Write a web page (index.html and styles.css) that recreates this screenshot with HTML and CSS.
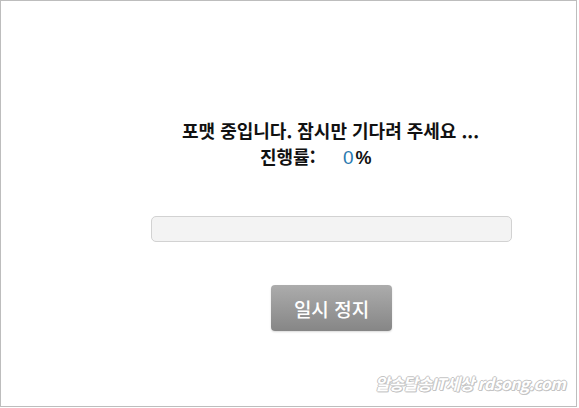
FILE: index.html
```html
<!DOCTYPE html>
<html lang="ko">
<head>
<meta charset="utf-8">
<link rel="stylesheet" href="styles.css">
</head>
<body>
<div class="frame">
  <div class="msg">
    <p class="title">포맷 중입니다. 잠시만 기다려 주세요 ...</p>
    <p class="progress-line"><span class="label">진행률:</span><span class="value">0</span><span class="pct">%</span></p>
  </div>
  <div class="bar"></div>
  <div class="actions">
    <button class="pause">일시 정지</button>
  </div>
  <div class="watermark">알송달송IT세상 rdsong.com</div>
</div>
</body>
</html>
```
FILE: styles.css
```css
html, body {
  margin: 0;
  padding: 0;
  background: #fff;
}
.frame {
  position: relative;
  box-sizing: border-box;
  width: 577px;
  height: 407px;
  border: 1px solid #bdbdbd;
  font-family: "Noto Sans CJK KR", "Noto Sans", sans-serif;
  color: #111;
  overflow: hidden;
}
.msg {
  padding-top: 116px;
}
.msg p {
  margin: 0;
  font-weight: bold;
  font-size: 18px;
  line-height: 26px;
  white-space: nowrap;
}
.title {
  padding-left: 181px;
}
.progress-line {
  padding-left: 259px;
}
.label {
  display: inline-block;
  width: 83px;
}
.value {
  color: #2a7ab0;
  font-family: "Liberation Sans", sans-serif;
  font-weight: normal;
  font-size: 19px;
  margin-right: 2px;
}
.pct {
  font-family: "Liberation Sans", sans-serif;
  font-size: 18px;
}
.bar {
  margin: 45px 0 0 150px;
  width: 361px;
  height: 26px;
  box-sizing: border-box;
  border: 1px solid #d2d2d2;
  border-radius: 5px;
  background: #f3f3f3;
}
.actions {
  margin: 43px 0 0 270px;
}
.pause {
  display: block;
  width: 121px;
  height: 46px;
  border: none;
  border-radius: 4px;
  background: linear-gradient(#acacac, #868686);
  color: #fff;
  font-family: "Noto Sans CJK KR", sans-serif;
  font-weight: 500;
  font-size: 19px;
  padding: 0;
  box-shadow: 0 1px 2px rgba(0,0,0,0.15);
}
.watermark {
  position: absolute;
  right: 11px;
  bottom: 11px;
  font-family: "Noto Sans CJK KR", sans-serif;
  font-weight: bold;
  font-style: italic;
  font-size: 16px;
  color: #fff;
  letter-spacing: -0.6px;
  text-shadow: 1px 0 0 #c4c4c4, -1px 0 0 #c4c4c4, 0 1px 0 #c4c4c4, 0 -1px 0 #c4c4c4, 1px 1px 0 #c4c4c4;
}
```
